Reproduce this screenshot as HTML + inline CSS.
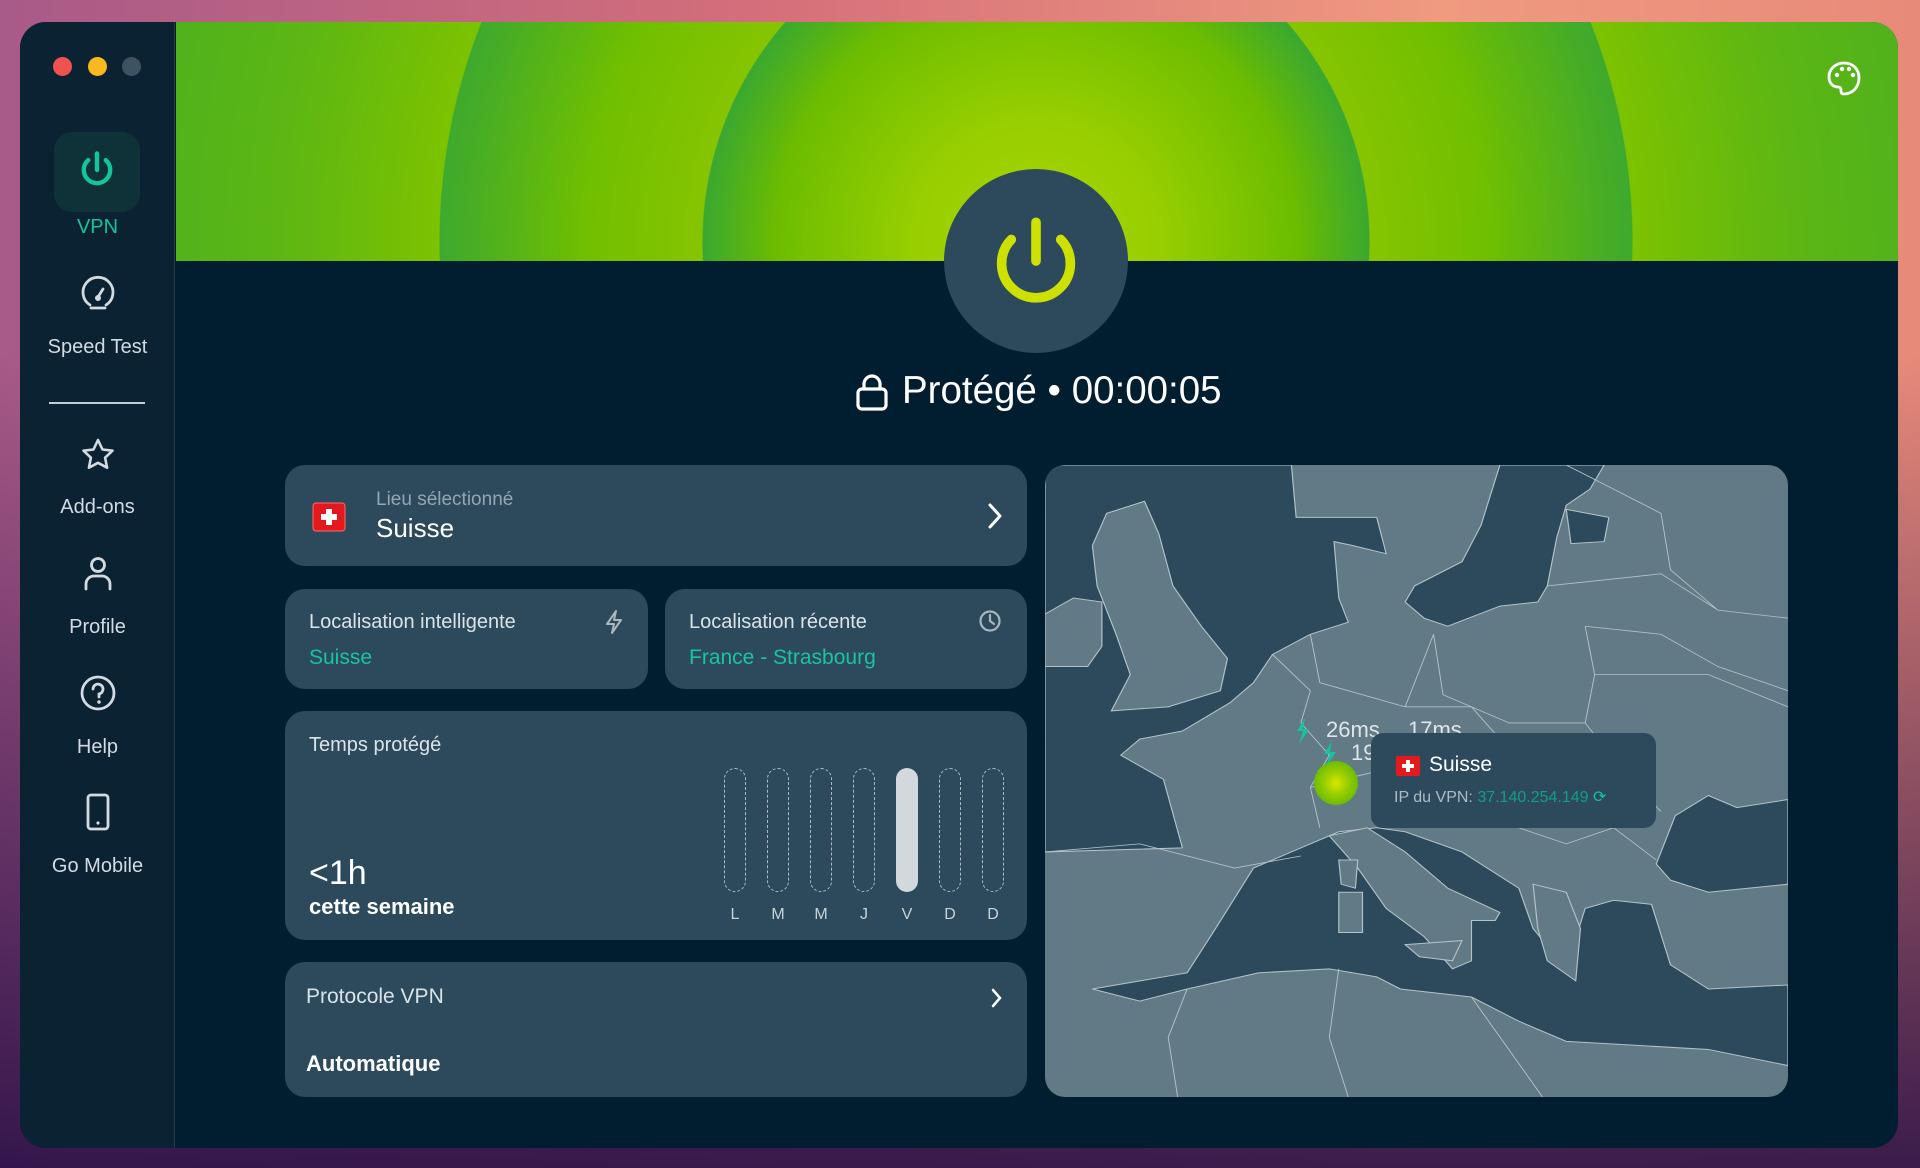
<!DOCTYPE html>
<html><head><meta charset="utf-8"><style>
*{margin:0;padding:0;box-sizing:border-box}
body{width:1920px;height:1168px;overflow:hidden;font-family:"Liberation Sans",sans-serif;position:relative;
background:linear-gradient(180deg,rgba(0,0,0,0) 0,rgba(40,15,70,.0) 30%,rgba(40,15,70,.9) 100%),linear-gradient(90deg,#a85a88 0%,#d56f7a 40%,#f09a80 75%,#e88a7a 100%);}
.win{position:absolute;left:20px;top:22px;width:1878px;height:1126px;border-radius:26px;overflow:hidden;background:#011e31}
.side{position:absolute;left:0;top:0;width:155px;height:100%;background:#0b2233;border-right:1px solid #24394a}
.dot{position:absolute;top:35px;width:19px;height:19px;border-radius:50%}
.head{position:absolute;left:156px;top:0;right:0;height:239px;
background:radial-gradient(circle at 860px 220px,#a6d400 0,#98cf00 120px,#6cbc00 260px,#3aa830 333px,#86c400 334px,#70bf00 450px,#3ea92e 596px,#7cc200 597px,#5cb614 760px,#46ae24 1000px)}
.pw{position:absolute;left:924px;top:147px;width:184px;height:184px;border-radius:50%;background:#2c4a5c}
.card{position:absolute;background:#2c4a5c;border-radius:20px}
.lab{position:absolute;color:#d3dbe0;font-size:20px;text-align:center;width:155px;left:0}
.t{position:absolute;white-space:nowrap}
.bar{position:absolute;top:57px;width:22px;height:124px;border:1.5px dashed #aeb9c0;border-radius:11px}
.day{position:absolute;top:195px;color:#c9d2d7;font-size:16px;width:22px;text-align:center}
</style></head><body>
<div class="win">
 <div class="head"></div>
 <div class="side">
  <div class="dot" style="left:33px;background:#f0524f"></div>
  <div class="dot" style="left:68px;background:#f8b81e"></div>
  <div class="dot" style="left:102px;background:#3e5260"></div>
  <div style="position:absolute;left:34px;top:110px;width:86px;height:80px;border-radius:18px;background:#0f3238"></div>
  <svg style="position:absolute;left:55px;top:126px" width="44" height="44" viewBox="0 0 40 40"><path d="M20 5v15M12 11a12 12 0 1 0 16 0" fill="none" stroke="#13c49c" stroke-width="4" stroke-linecap="round"/></svg>
  <div class="lab" style="top:194px;color:#13c49c">VPN</div>
  <svg style="position:absolute;left:59px;top:252px" width="38" height="38" viewBox="0 0 38 38"><path d="M11 31a15 15 0 1 1 16 0M12 34h14M19 23l5-8" fill="none" stroke="#d3dbe0" stroke-width="2.8" stroke-linecap="round"/><circle cx="19" cy="24" r="3" fill="#d3dbe0"/></svg>
  <div class="lab" style="top:314px">Speed Test</div>
  <div style="position:absolute;left:29px;top:380px;width:96px;height:2px;background:#c6ced3"></div>
  <svg style="position:absolute;left:59px;top:414px" width="38" height="38" viewBox="0 0 38 38"><path d="M19 4l4.5 9.5 10 1.2-7.4 7 2 10L19 26.8 9.9 31.7l2-10-7.4-7 10-1.2z" fill="none" stroke="#d3dbe0" stroke-width="2.6" stroke-linejoin="round"/></svg>
  <div class="lab" style="top:474px">Add-ons</div>
  <svg style="position:absolute;left:59px;top:532px" width="38" height="38" viewBox="0 0 38 38"><circle cx="19" cy="11" r="6.5" fill="none" stroke="#d3dbe0" stroke-width="2.8"/><path d="M7 35v-5a8 8 0 0 1 8-8h8a8 8 0 0 1 8 8v5" fill="none" stroke="#d3dbe0" stroke-width="2.8" stroke-linecap="round"/></svg>
  <div class="lab" style="top:594px">Profile</div>
  <svg style="position:absolute;left:59px;top:652px" width="38" height="38" viewBox="0 0 38 38"><circle cx="19" cy="19" r="16" fill="none" stroke="#d3dbe0" stroke-width="2.8"/><path d="M14 15a5 5 0 1 1 6 5v3" fill="none" stroke="#d3dbe0" stroke-width="2.8" stroke-linecap="round"/><circle cx="20" cy="28" r="1.8" fill="#d3dbe0"/></svg>
  <div class="lab" style="top:714px">Help</div>
  <svg style="position:absolute;left:59px;top:770px" width="38" height="40" viewBox="0 0 38 40"><rect x="9" y="3" width="20" height="34" rx="3" fill="none" stroke="#d3dbe0" stroke-width="2.8"/><circle cx="19" cy="31" r="1.6" fill="#d3dbe0"/></svg>
  <div class="lab" style="top:833px">Go Mobile</div>
 </div>
 <svg style="position:absolute;left:1806px;top:38px" width="36" height="36" viewBox="0 0 36 36"><path d="M18 3C9 3 3 9.5 3 17c0 6 4 10 9 10 3 0 3 2 3 4 0 2 1 3 3 3 8.5 0 15-7 15-16S27 3 18 3z" fill="none" stroke="#fff" stroke-width="2.8"/><circle cx="11" cy="15" r="2.2" fill="#fff"/><circle cx="16" cy="9" r="2.2" fill="#fff"/><circle cx="23" cy="9" r="2.2" fill="#fff"/><circle cx="27" cy="15" r="2.2" fill="#fff"/></svg>
 <div class="pw"></div>
 <svg style="position:absolute;left:958px;top:181px" width="116" height="116" viewBox="0 0 108 108"><path d="M54 18v36M31 34a32 32 0 1 0 46 0" fill="none" stroke="#cde000" stroke-width="9" stroke-linecap="round"/></svg>
 <svg style="position:absolute;left:835px;top:350px" width="34" height="40" viewBox="0 0 34 40"><rect x="3" y="17" width="28" height="20" rx="4" fill="none" stroke="#fff" stroke-width="3.2"/><path d="M9 17v-5a8 8 0 0 1 16 0v5" fill="none" stroke="#fff" stroke-width="3.2"/></svg>
 <div class="t" style="left:882px;top:347px;color:#fff;font-size:38.5px">Protégé • 00:00:05</div>

 <div class="card" style="left:265px;top:443px;width:742px;height:101px">
  <svg style="position:absolute;left:27px;top:37px" width="34" height="30" viewBox="0 0 34 30"><rect x="1" y="1" width="32" height="28" rx="3" fill="#e3191d" stroke="#ff6a6a"/><path d="M14 7h6v5h5v6h-5v5h-6v-5H9v-6h5z" fill="#fff"/></svg>
  <div class="t" style="left:91px;top:24px;color:#94a6b0;font-size:19px">Lieu sélectionné</div>
  <div class="t" style="left:91px;top:48px;color:#fff;font-size:26px">Suisse</div>
  <svg style="position:absolute;left:701px;top:37px" width="18" height="28" viewBox="0 0 18 28"><path d="M4 3l10 11-10 11" fill="none" stroke="#fff" stroke-width="3" stroke-linecap="round" stroke-linejoin="round"/></svg>
 </div>
 <div class="card" style="left:265px;top:567px;width:363px;height:100px">
  <div class="t" style="left:24px;top:22px;color:#dbe3e7;font-size:20px">Localisation intelligente</div>
  <div class="t" style="left:24px;top:57px;color:#1bc39e;font-size:21px">Suisse</div>
  <svg style="position:absolute;left:318px;top:20px" width="22" height="26" viewBox="0 0 22 26"><path d="M13 2L4 15h7l-2 9 9-13h-7z" fill="none" stroke="#aab6bd" stroke-width="2" stroke-linejoin="round"/></svg>
 </div>
 <div class="card" style="left:645px;top:567px;width:362px;height:100px">
  <div class="t" style="left:24px;top:22px;color:#dbe3e7;font-size:20px">Localisation récente</div>
  <div class="t" style="left:24px;top:57px;color:#1bc39e;font-size:21px">France - Strasbourg</div>
  <svg style="position:absolute;left:313px;top:20px" width="24" height="24" viewBox="0 0 24 24"><circle cx="12" cy="12" r="9.5" fill="none" stroke="#aab6bd" stroke-width="2.2"/><path d="M12 6v6l4 3" fill="none" stroke="#aab6bd" stroke-width="2.2" stroke-linecap="round"/></svg>
 </div>
 <div class="card" style="left:265px;top:689px;width:742px;height:229px">
  <div class="t" style="left:24px;top:23px;color:#dbe3e7;font-size:20px">Temps protégé</div>
  <div class="t" style="left:24px;top:143px;color:#fff;font-size:34px">&lt;1h</div>
  <div class="t" style="left:24px;top:183px;color:#fff;font-size:22px;font-weight:bold">cette semaine</div>
  <div class="bar" style="left:439px"></div><div class="bar" style="left:482px"></div><div class="bar" style="left:525px"></div><div class="bar" style="left:568px"></div>
  <div class="bar" style="left:611px;border:none;background:#d2d8db"></div>
  <div class="bar" style="left:654px"></div><div class="bar" style="left:697px"></div>
  <div class="day" style="left:439px">L</div><div class="day" style="left:482px">M</div><div class="day" style="left:525px">M</div><div class="day" style="left:568px">J</div><div class="day" style="left:611px">V</div><div class="day" style="left:654px">D</div><div class="day" style="left:697px">D</div>
 </div>
 <div class="card" style="left:265px;top:940px;width:742px;height:135px">
  <div class="t" style="left:21px;top:23px;color:#dbe3e7;font-size:21px">Protocole VPN</div>
  <div class="t" style="left:21px;top:89px;color:#fff;font-size:22px;font-weight:bold">Automatique</div>
  <svg style="position:absolute;left:705px;top:25px" width="14" height="22" viewBox="0 0 14 22"><path d="M3 3l7 8-7 8" fill="none" stroke="#fff" stroke-width="2.5" stroke-linecap="round"/></svg>
 </div>

 <div style="position:absolute;left:1025px;top:443px;width:743px;height:632px;border-radius:20px;overflow:hidden">
 <svg width="743" height="632" viewBox="0 0 1568 1568" preserveAspectRatio="none" style="display:block">
  <rect width="1568" height="1568" fill="#627a85"/>
  <g fill="#2c4a5c" stroke="#b4c2c8" stroke-width="2.5">
   <path d="M0 0H520L530 130L560 130L700 130L720 220L650 200L610 190L620 330L640 390L560 420L480 470L440 540L390 590L290 660L200 680L160 720L250 780L290 950L0 960Z"/>
   <path d="M960 0H1180L1150 60L1100 100L1080 180L1060 300L1040 340L960 350L850 400L800 380L760 340L780 300L880 240L920 150Z"/>
   <path d="M100 1300L300 1260L360 1150L440 1000L520 960L620 910L700 900L760 910L880 960L1000 1050L1030 1150L1100 1250L1140 1100L1200 1080L1280 1090L1320 1240L1400 1300L1568 1290V1490L1400 1450L1250 1440L1100 1430L1000 1380L900 1320L750 1300L700 1270L600 1250L450 1260L300 1300L200 1330Z"/>
   <path d="M1290 990L1330 870L1400 820L1460 850L1568 830V1040L1400 1060L1320 1030Z"/>
   <path d="M1100 110L1190 130L1180 190L1110 195Z"/>
  </g>
  <g fill="#627a85" stroke="#b4c2c8" stroke-width="2.5">
   <path d="M130 120L210 90L240 170L270 300L330 400L385 480L370 560L260 600L140 610L180 520L150 420L110 300L100 200Z"/>
   <path d="M0 370L60 330L120 340L120 450L90 500L0 500Z"/>
   <path d="M600 920L680 900L760 960L850 1050L960 1110L950 1130L900 1130L900 1230L860 1250L800 1170L720 1100L660 1000Z"/>
   <path d="M760 1190L880 1180L860 1230L790 1220Z"/>
   <path d="M620 1060L670 1060L670 1160L620 1160Z"/>
   <path d="M620 980L660 980L655 1050L625 1040Z"/>
   <path d="M1030 1040L1100 1060L1130 1150L1120 1280L1060 1230L1040 1150Z"/>
  </g>
  <g fill="none" stroke="#b4c2c8" stroke-width="2">
   <path d="M480 470L560 560L540 640L600 720L560 800L580 900M560 420L580 540L760 600L820 420M820 420L840 570L980 640L1140 640L1160 520L1140 400M1140 400L1300 420L1420 500L1568 560M1160 520L1400 520L1568 600M760 600L900 600L960 680M560 800L700 760L860 720M1100 0L1300 120L1320 260L1420 360L1568 380M1060 300L1300 270L1420 360M1140 640L1220 760L1300 860M960 680L1020 820L1000 900L1100 940L1200 900L1290 980M540 970L400 1000L200 940L0 960M300 1300L260 1420L280 1568M620 1250L600 1420L640 1568M900 1320L1050 1568"/>
  </g>
 </svg>
 </div>
 <svg style="position:absolute;left:1025px;top:443px" width="743" height="632" viewBox="1045 465 743 632">
  <defs><radialGradient id="g"><stop offset="0" stop-color="#d8e800"/><stop offset=".5" stop-color="#9ccf00"/><stop offset="1" stop-color="#6cbc00"/></radialGradient></defs>
  <circle cx="1336" cy="783" r="22" fill="url(#g)"/>
  <path d="M1305 718l-8 13h6l-4 13 10-15h-6z" fill="#13c49c"/>
  <path d="M1332 741l-8 13h6l-4 13 10-15h-6z" fill="#13c49c"/>
  <text x="1326" y="737" fill="#dfe6ea" font-size="22" font-family="Liberation Sans">26ms</text>
  <text x="1408" y="737" fill="#dfe6ea" font-size="22" font-family="Liberation Sans">17ms</text>
  <text x="1351" y="760" fill="#dfe6ea" font-size="22" font-family="Liberation Sans">19</text>
 </svg>
 <div style="position:absolute;left:1351px;top:711px;width:285px;height:95px;border-radius:12px;background:#2c4a5c">
  <svg style="position:absolute;left:24px;top:22px" width="26" height="22" viewBox="0 0 26 22"><rect x="1" y="1" width="24" height="20" rx="2" fill="#e3191d"/><path d="M11 5h4v4h4v4h-4v4h-4v-4H7V9h4z" fill="#fff"/></svg>
  <div class="t" style="left:58px;top:20px;color:#fff;font-size:21px">Suisse</div>
  <div class="t" style="left:23px;top:54px;color:#aebbc2;font-size:16px">IP du VPN: <span style="color:#139e82">37.140.254.149</span> <span style="color:#13c49c">⟳</span></div>
 </div>
</div>
</body></html>
